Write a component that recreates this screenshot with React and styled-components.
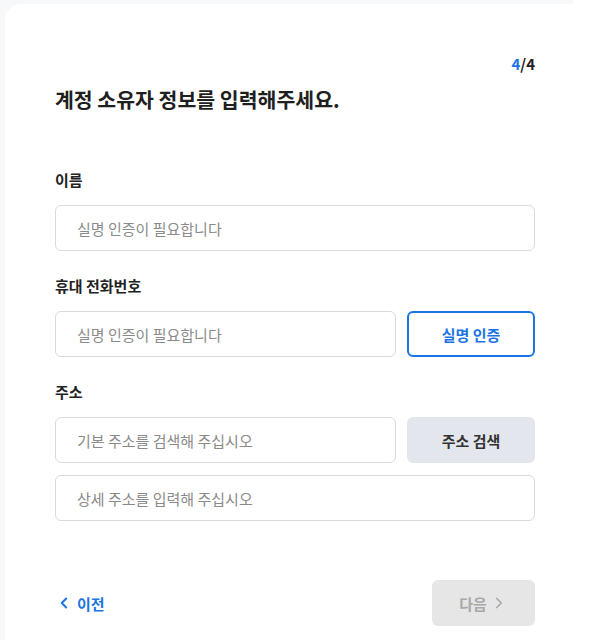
import React from 'react'
import styled, { createGlobalStyle } from 'styled-components'
import { ChevronLeft, ChevronRight } from 'lucide-react'

const GlobalStyle = createGlobalStyle`
  body {
    margin: 0;
    background: #fff;
    font-family: "Noto Sans CJK KR", "Noto Sans", sans-serif;
  }
`

const Backdrop = styled.div`
  width: 573px;
  height: 640px;
  padding: 4px 0 0 5px;
  box-sizing: border-box;
  background: #f7f8fa;
`

const Card = styled.div`
  width: 598px;
  height: 660px;
  box-sizing: border-box;
  background: #fff;
  border-top-left-radius: 16px;
  padding: 50px 68px 0 50px;
  display: flex;
  flex-direction: column;
`

const Step = styled.div`
  align-self: flex-end;
  font-size: 15px;
  line-height: 20px;
  font-weight: 700;
  color: #222;

  span {
    color: #1b74e4;
  }
`

const Title = styled.h1`
  margin: 11px 0 57px;
  font-size: 20.5px;
  line-height: 28px;
  font-weight: 700;
  color: #1f1f1f;
`

const Fields = styled.div`
  display: flex;
  flex-direction: column;
  gap: 25px;
`

const Field = styled.div`
  display: flex;
  flex-direction: column;
  gap: 15px;
`

const Label = styled.label`
  font-size: 15px;
  line-height: 20px;
  font-weight: 700;
  color: #222;
`

const Stack = styled.div`
  display: flex;
  flex-direction: column;
  gap: 12px;
`

const Input = styled.input`
  display: block;
  width: 100%;
  min-width: 0;
  height: 46px;
  box-sizing: border-box;
  border: 1px solid #dadada;
  border-radius: 6px;
  padding: 0 21px;
  font-family: inherit;
  font-size: 15px;
  color: #222;
  outline: none;

  &::placeholder {
    color: #8a8a8a;
  }
`

const Row = styled.div`
  display: flex;
  gap: 11px;

  ${Input} {
    flex: 1;
  }
`

const SideButton = styled.button`
  width: 128px;
  height: 46px;
  flex-shrink: 0;
  box-sizing: border-box;
  border-radius: 6px;
  font-family: inherit;
  font-size: 15px;
  font-weight: 700;
  cursor: pointer;
  border: ${p => (p.$outline ? '2px solid #1b74e4' : 'none')};
  background: ${p => (p.$outline ? '#fff' : '#e3e6ed')};
  color: ${p => (p.$outline ? '#1b74e4' : '#333')};
`

const Footer = styled.div`
  margin-top: 59px;
  display: flex;
  justify-content: space-between;
  align-items: center;
`

const BackButton = styled.button`
  display: flex;
  align-items: center;
  gap: 4px;
  padding: 0;
  border: none;
  background: none;
  font-family: inherit;
  font-size: 15px;
  font-weight: 700;
  color: #1b74e4;
  cursor: pointer;
`

const NextButton = styled.button`
  width: 103px;
  height: 46px;
  display: flex;
  align-items: center;
  justify-content: center;
  gap: 3px;
  padding: 0;
  border: none;
  border-radius: 6px;
  background: #e6e6e6;
  color: #a8a8a8;
  font-family: inherit;
  font-size: 15px;
  font-weight: 700;
`

const App = () => {
  return (
    <>
      <GlobalStyle />
      <Backdrop>
        <Card>
          <Step><span>4</span>/4</Step>
          <Title>계정 소유자 정보를 입력해주세요.</Title>
          <Fields>
            <Field>
              <Label>이름</Label>
              <Input placeholder="실명 인증이 필요합니다" />
            </Field>
            <Field>
              <Label>휴대 전화번호</Label>
              <Row>
                <Input placeholder="실명 인증이 필요합니다" />
                <SideButton $outline>실명 인증</SideButton>
              </Row>
            </Field>
            <Field>
              <Label>주소</Label>
              <Stack>
                <Row>
                  <Input placeholder="기본 주소를 검색해 주십시오" />
                  <SideButton>주소 검색</SideButton>
                </Row>
                <Input placeholder="상세 주소를 입력해 주십시오" />
              </Stack>
            </Field>
          </Fields>
          <Footer>
            <BackButton>
              <ChevronLeft size={18} strokeWidth={2.6} />
              이전
            </BackButton>
            <NextButton disabled>
              다음
              <ChevronRight size={18} strokeWidth={2.2} />
            </NextButton>
          </Footer>
        </Card>
      </Backdrop>
    </>
  )
}

export default App
